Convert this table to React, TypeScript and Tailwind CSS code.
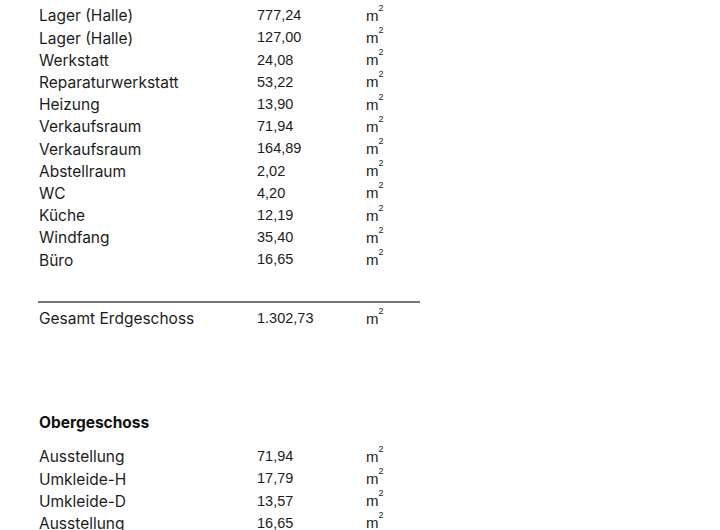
import React from "react";

const eg: [string, string][] = [
  ["Lager (Halle)", "777,24"],
  ["Lager (Halle)", "127,00"],
  ["Werkstatt", "24,08"],
  ["Reparaturwerkstatt", "53,22"],
  ["Heizung", "13,90"],
  ["Verkaufsraum", "71,94"],
  ["Verkaufsraum", "164,89"],
  ["Abstellraum", "2,02"],
  ["WC", "4,20"],
  ["Küche", "12,19"],
  ["Windfang", "35,40"],
  ["Büro", "16,65"],
];

const og: [string, string][] = [
  ["Ausstellung", "71,94"],
  ["Umkleide-H", "17,79"],
  ["Umkleide-D", "13,57"],
  ["Ausstellung", "16,65"],
];

function Row({ label, value }: { label: string; value: string }) {
  return (
    <div className="flex h-[22.2px] items-center">
      <div className="w-[218px] font-['Inter',sans-serif] text-[15.5px] text-[#1c1c1c]">{label}</div>
      <div className="w-[109px] font-['Liberation_Sans',sans-serif] text-[14.5px] text-[#1c1c1c]">{value}</div>
      <div className="font-['Liberation_Sans',sans-serif] text-[15px] text-[#1c1c1c]">
        m<span className="inline-block align-top text-[9px] leading-none relative top-[-1px]">2</span>
      </div>
    </div>
  );
}

export default function App() {
  return (
    <div className="w-[720px] h-[530px] overflow-hidden bg-white pl-[39px] pt-[5px]">
      {eg.map(([l, v], i) => (
        <Row key={i} label={l} value={v} />
      ))}
      <div className="mt-[30px] w-[382px] ml-[-1px] h-[1.5px] bg-[#777]" />
      <div className="mt-[5px]">
        <Row label="Gesamt Erdgeschoss" value="1.302,73" />
      </div>
      <div className="mt-[82px] h-[22px] flex items-center font-['Inter',sans-serif] text-[15.5px] font-bold text-[#111]">
        Obergeschoss
      </div>
      <div className="mt-[12px]">
        {og.map(([l, v], i) => (
          <Row key={i} label={l} value={v} />
        ))}
      </div>
    </div>
  );
}
